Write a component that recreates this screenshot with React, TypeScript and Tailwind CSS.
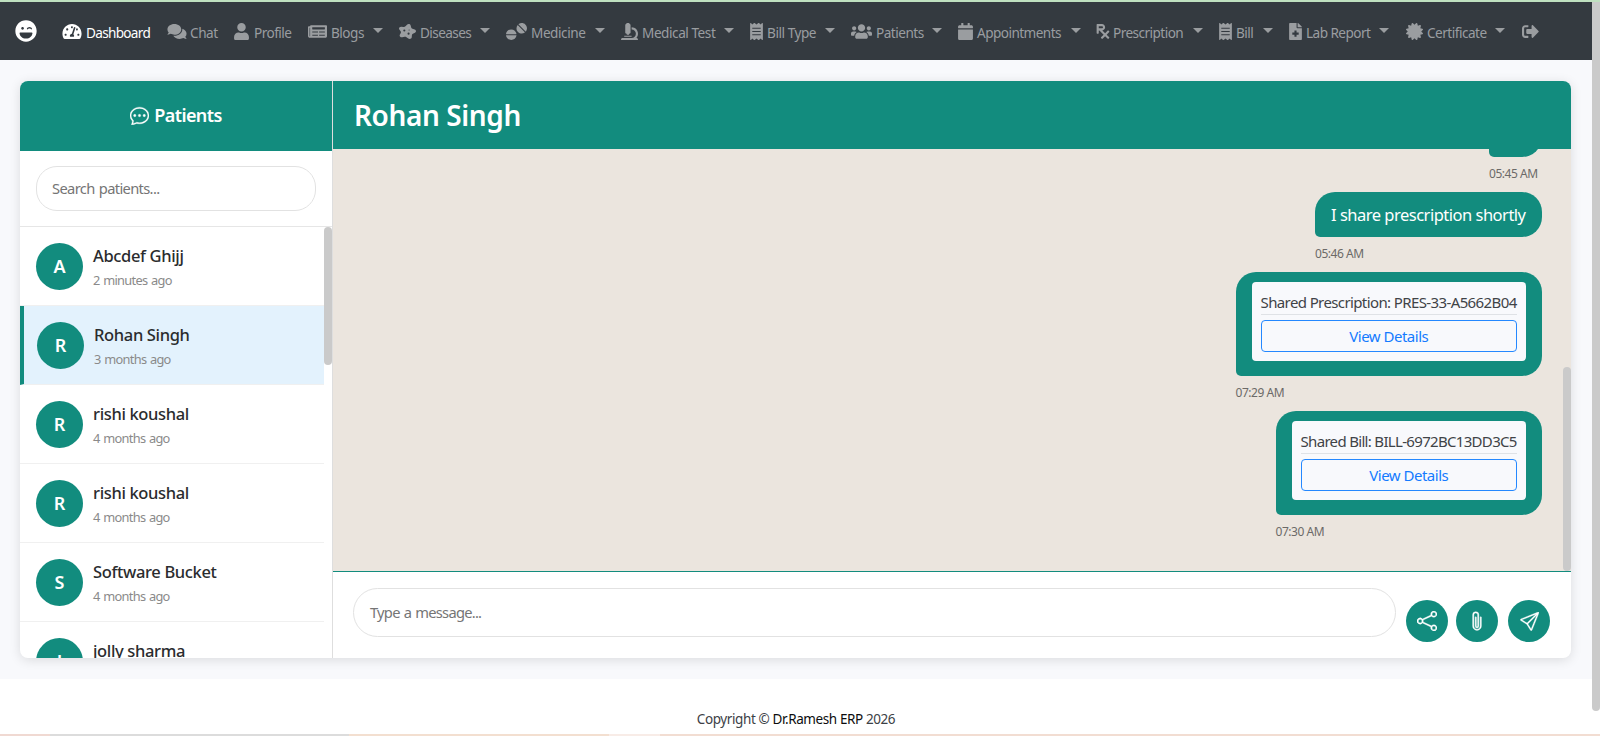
import React, { FC, ReactNode } from "react";
import {
  FaCalendar,
  FaCertificate,
  FaComments,
  FaDisease,
  FaFileMedical,
  FaLaughWink,
  FaMicroscope,
  FaNewspaper,
  FaPrescription,
  FaReceipt,
  FaSignOutAlt,
  FaTablets,
  FaTachometerAlt,
  FaUser,
  FaUsers,
} from "react-icons/fa";
import { BsChatDots, BsPaperclip, BsSend, BsShare } from "react-icons/bs";
import { IconType } from "react-icons";

interface NavItem {
  label: string;
  icon: IconType;
  iconSize: string;
  width: string;
  iconBox: string;
  labelBox: string;
  dropdown?: boolean;
  active?: boolean;
}

interface Patient {
  id: number;
  name: string;
  time: string;
}

const navItems: NavItem[] = [
  { label: "Dashboard", icon: FaTachometerAlt, iconSize: "w-[20px]", width: "w-[105px]", iconBox: "w-[24px]", labelBox: "w-[65px] tracking-[-0.7px]", active: true },
  { label: "Chat", icon: FaComments, iconSize: "w-[20px]", width: "w-[67px]", iconBox: "w-[23px]", labelBox: "w-[28px] tracking-[-0.45px]" },
  { label: "Profile", icon: FaUser, iconSize: "w-[15px]", width: "w-[74px]", iconBox: "w-[20px]", labelBox: "w-[38px] tracking-[-0.55px]" },
  { label: "Blogs", icon: FaNewspaper, iconSize: "w-[19px]", width: "w-[91px]", iconBox: "w-[23px]", labelBox: "w-[42px] tracking-[-0.5px]", dropdown: true },
  { label: "Diseases", icon: FaDisease, iconSize: "w-[17px]", width: "w-[107px]", iconBox: "w-[21px]", labelBox: "w-[60px] tracking-[-0.6px]", dropdown: true },
  { label: "Medicine", icon: FaTablets, iconSize: "w-[21px]", width: "w-[115px]", iconBox: "w-[25px]", labelBox: "w-[64px] tracking-[-0.45px]", dropdown: true },
  { label: "Medical Test", icon: FaMicroscope, iconSize: "w-[17px]", width: "w-[129px]", iconBox: "w-[21px]", labelBox: "w-[82px] tracking-[-0.45px]", dropdown: true },
  { label: "Bill Type", icon: FaReceipt, iconSize: "w-[13px]", width: "w-[101px]", iconBox: "w-[17px]", labelBox: "w-[58px] tracking-[-0.45px]", dropdown: true },
  { label: "Patients", icon: FaUsers, iconSize: "w-[21px]", width: "w-[107px]", iconBox: "w-[25px]", labelBox: "w-[56px] tracking-[-0.5px]", dropdown: true },
  { label: "Appointments", icon: FaCalendar, iconSize: "w-[15px]", width: "w-[138px]", iconBox: "w-[19px]", labelBox: "w-[94px] tracking-[-0.55px]", dropdown: true },
  { label: "Prescription", icon: FaPrescription, iconSize: "w-[14px]", width: "w-[123px]", iconBox: "w-[17px]", labelBox: "w-[80px] tracking-[-0.55px]", dropdown: true },
  { label: "Bill", icon: FaReceipt, iconSize: "w-[13px]", width: "w-[70px]", iconBox: "w-[17px]", labelBox: "w-[27px] tracking-[-0.55px]", dropdown: true },
  { label: "Lab Report", icon: FaFileMedical, iconSize: "w-[13px]", width: "w-[117px]", iconBox: "w-[17px]", labelBox: "w-[73px] tracking-[-0.55px]", dropdown: true },
  { label: "Certificate", icon: FaCertificate, iconSize: "w-[17px]", width: "w-[116px]", iconBox: "w-[21px]", labelBox: "w-[68px] tracking-[-0.5px]", dropdown: true },
];

const patients: Patient[] = [
  { id: 1, name: "Abcdef Ghijj", time: "2 minutes ago" },
  { id: 2, name: "Rohan Singh", time: "3 months ago" },
  { id: 3, name: "rishi koushal", time: "4 months ago" },
  { id: 4, name: "rishi koushal", time: "4 months ago" },
  { id: 5, name: "Software Bucket", time: "4 months ago" },
  { id: 6, name: "jolly sharma", time: "4 months ago" },
];

const selectedId = 2;

const Navbar: FC = () => (
  <nav className="flex h-[58px] items-center bg-[#343a40] pl-[15px] text-[#9a9da0]">
    <FaLaughWink className="mr-[25px] size-[22px] shrink-0 text-white" />
    {navItems.map((item) => {
      const Icon = item.icon;
      return (
        <div
          key={item.label}
          className={`flex h-6 shrink-0 items-center ${item.width} ${item.active ? "text-white" : ""}`}
        >
          <span className={`shrink-0 ${item.iconBox}`}>
            <Icon className={`h-[17px] ${item.iconSize}`} />
          </span>
          <span className={`mt-1 shrink-0 text-[13.6px] leading-5 whitespace-nowrap ${item.labelBox}`}>
            {item.label}
          </span>
          {item.dropdown && (
            <span className="mb-px border-x-[5px] border-t-[5px] border-x-transparent border-t-current" />
          )}
        </div>
      );
    })}
    <FaSignOutAlt className="size-[17px] shrink-0" />
  </nav>
);

const PatientRow: FC<{ patient: Patient }> = ({ patient }) => {
  const active = patient.id === selectedId;
  return (
    <div
      className={`flex h-[79px] shrink-0 items-center border-b border-b-[#f0f0f0] ${
        active ? "border-l-4 border-l-[#128c7e] bg-[#e3f2fd] pl-[13px]" : "pl-4"
      }`}
    >
      <div className="mr-[10px] flex size-[47px] shrink-0 items-center justify-center rounded-full bg-[#128c7e] text-[18px] font-semibold text-white">
        {patient.name.charAt(0).toUpperCase()}
      </div>
      <div className="pt-px">
        <p className="text-[16.5px] leading-6 font-medium tracking-[-0.35px] text-[#2a2c2e]">
          {patient.name}
        </p>
        <p className="mt-[2px] text-[12.8px] leading-5 tracking-[-0.7px] text-[#8a8a8a] [word-spacing:1px]">
          {patient.time}
        </p>
      </div>
    </div>
  );
};

const Sidebar: FC = () => (
  <aside className="flex w-[313px] shrink-0 flex-col border-r border-[#dedede]">
    <div className="flex h-[70px] shrink-0 items-center justify-center gap-[5px] bg-[#128c7e] pb-px text-white">
      <BsChatDots className="size-[19px]" strokeWidth={0.3} />
      <h2 className="text-[18px] font-semibold tracking-[-0.6px]">Patients</h2>
    </div>
    <div className="h-[76px] shrink-0 border-b border-[#e6e6e6] px-4 pt-[15px]">
      <div className="flex h-[45px] w-[280px] items-center rounded-[21px] border border-[#e2e2e2] px-[15px] text-[14.7px] tracking-[-0.65px] text-[#757575] [word-spacing:1px]">
        Search patients...
      </div>
    </div>
    <div className="flex min-h-0 grow overflow-hidden">
      <div className="flex grow flex-col">
        {patients.map((patient) => (
          <PatientRow key={patient.id} patient={patient} />
        ))}
      </div>
      <div className="h-[138px] w-2 shrink-0 rounded-full bg-[#cacaca]" />
    </div>
  </aside>
);

const Message: FC<{ time: string; width: string; children: ReactNode }> = ({ time, width, children }) => (
  <div className={`shrink-0 ${width}`}>
    <div className="rounded-[20px] rounded-bl-[5px] bg-[#128c7e] text-white">{children}</div>
    <p className="h-[35px] pt-[6px] text-[12px] leading-[22px] tracking-[-0.45px] text-[#6c6a68]">{time}</p>
  </div>
);

const SharedCard: FC<{ text: string; tracking: string }> = ({ text, tracking }) => (
  <div className="h-[104px] px-4 pt-[10px]">
    <div className="h-[79px] rounded-[4px] bg-[#f8f9fc] px-[9px] pt-[8px]">
      <p className={`h-[25px] border-b border-[#dfe2e6] text-[15px] leading-6 whitespace-nowrap text-[#3f4347] ${tracking}`}>
        {text}
      </p>
      <div className="mt-[5px] flex h-8 items-center justify-center rounded-[4px] border border-[#2488ff] text-[15px] tracking-[-0.5px] text-[#147bff]">
        View Details
      </div>
    </div>
  </div>
);

const RoundButton: FC<{ children: ReactNode }> = ({ children }) => (
  <div className="flex size-[42px] shrink-0 items-center justify-center rounded-full bg-[#128c7e] text-white">
    {children}
  </div>
);

const ChatWindow: FC = () => (
  <section className="flex grow flex-col">
    <div className="flex h-[68px] shrink-0 items-center bg-[#128c7e] pl-[21px]">
      <h1 className="text-[28px] font-semibold tracking-[-0.4px] text-white">Rohan Singh</h1>
    </div>
    <div className="flex h-[422px] shrink-0 overflow-hidden bg-[#ebe5de]">
      <div className="flex grow flex-col items-end justify-end pr-[21px] pb-[21px]">
        <Message time="05:45 AM" width="w-[53px]">
          <p className="h-[45px]" />
        </Message>
        <Message time="05:46 AM" width="w-[227px]">
          <p className="flex h-[45px] items-center px-4 pt-px text-[16.5px] tracking-[-0.5px] whitespace-nowrap">
            I share prescription shortly
          </p>
        </Message>
        <Message time="07:29 AM" width="w-[306.5px]">
          <SharedCard text="Shared Prescription: PRES-33-A5662B04" tracking="tracking-[-0.61px]" />
        </Message>
        <Message time="07:30 AM" width="w-[266.5px]">
          <SharedCard text="Shared Bill: BILL-6972BC13DD3C5" tracking="tracking-[-0.68px]" />
        </Message>
      </div>
      <div className="mt-[218px] w-2 shrink-0 rounded-full bg-[#cacaca]" />
    </div>
    <div className="flex grow border-t border-[#128c7e] pl-[20px]">
      <div className="mt-4 flex h-[49px] w-[1043px] items-center rounded-full border border-[#e2e2e2] px-4 text-[14.7px] tracking-[-0.75px] text-[#757575] [word-spacing:1px]">
        Type a message...
      </div>
      <div className="mt-7 ml-[10px] flex">
        <RoundButton>
          <BsShare className="size-5" strokeWidth={0.3} />
        </RoundButton>
        <span className="w-2" />
        <RoundButton>
          <BsPaperclip className="size-5" strokeWidth={0.3} />
        </RoundButton>
        <span className="w-[10px]" />
        <RoundButton>
          <BsSend className="size-[19px]" strokeWidth={0.3} />
        </RoundButton>
      </div>
    </div>
  </section>
);

const App: FC = () => (
  <div className="flex h-[736px] w-[1600px] flex-col overflow-hidden bg-white font-['Noto_Sans','Open_Sans',sans-serif]">
    <div className="h-[2px] shrink-0 bg-[#bfe0c0]" />
    <div className="flex h-[732px] shrink-0">
      <div className="flex w-[1592px] shrink-0 flex-col">
        <Navbar />
        <main className="h-[619px] shrink-0 bg-[#f8f9fc] px-5 pt-[21px]">
          <div className="flex h-[577px] w-[1551px] overflow-hidden rounded-[8px] bg-white shadow-[0_2px_12px_rgba(0,0,0,0.12)]">
            <Sidebar />
            <ChatWindow />
          </div>
        </main>
        <footer className="flex grow items-end justify-center pb-[5px] text-[13.5px] tracking-[-0.4px] text-[#3c4146]">
          <p>
            Copyright © <span className="text-[#0c0d0e]">Dr.Ramesh ERP</span> 2026
          </p>
        </footer>
      </div>
      <div className="h-[709px] w-2 rounded-b-full bg-[#cacaca]" />
    </div>
    <div className="flex h-[2px] shrink-0">
      <div className="w-[50px] bg-[#f0d9d2]" />
      <div className="w-[299px] bg-[#dcdcdc]" />
      <div className="w-[260px] bg-[#f3dfd0]" />
      <div className="w-[51px] bg-[#f8ece7]" />
      <div className="grow bg-[#f2ddd2]" />
    </div>
  </div>
);

export default App;
